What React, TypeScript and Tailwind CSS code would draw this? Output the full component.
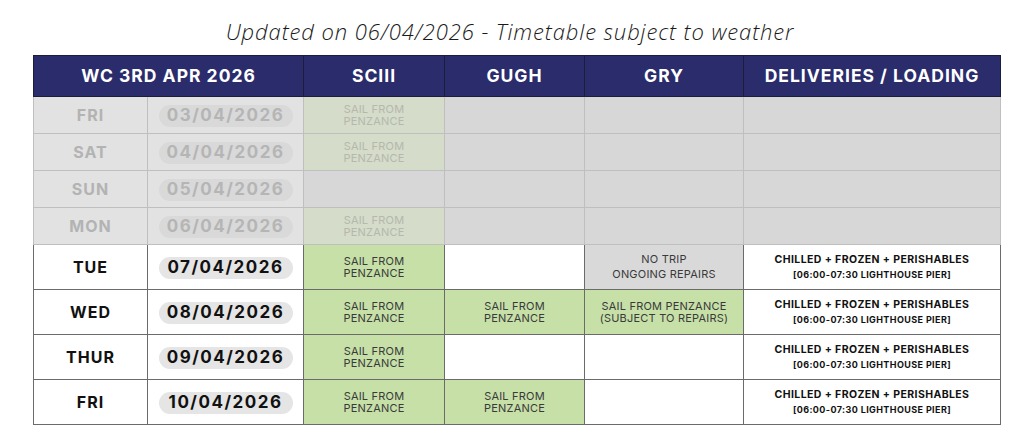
import React from 'react';

type Cell = { text?: string[]; tone?: 'green' | 'grey' | 'none' };

type Row = {
  day: string;
  date: string;
  past: boolean;
  scilly: Cell;
  gugh: Cell;
  gry: Cell;
  delivery: boolean;
};

const sail: Cell = { text: ['SAIL FROM', 'PENZANCE'], tone: 'green' };
const empty: Cell = { tone: 'none' };

const rows: Row[] = [
  { day: 'FRI', date: '03/04/2026', past: true, scilly: sail, gugh: empty, gry: empty, delivery: false },
  { day: 'SAT', date: '04/04/2026', past: true, scilly: sail, gugh: empty, gry: empty, delivery: false },
  { day: 'SUN', date: '05/04/2026', past: true, scilly: empty, gugh: empty, gry: empty, delivery: false },
  { day: 'MON', date: '06/04/2026', past: true, scilly: sail, gugh: empty, gry: empty, delivery: false },
  {
    day: 'TUE', date: '07/04/2026', past: false, scilly: sail, gugh: empty,
    gry: { text: ['NO TRIP', 'ONGOING REPAIRS'], tone: 'grey' }, delivery: true,
  },
  {
    day: 'WED', date: '08/04/2026', past: false, scilly: sail, gugh: sail,
    gry: { text: ['SAIL FROM PENZANCE', '(SUBJECT TO REPAIRS)'], tone: 'green' }, delivery: true,
  },
  { day: 'THUR', date: '09/04/2026', past: false, scilly: sail, gugh: empty, gry: empty, delivery: true },
  { day: 'FRI', date: '10/04/2026', past: false, scilly: sail, gugh: sail, gry: empty, delivery: true },
];

const font = { fontFamily: '"Inter", "Noto Sans", sans-serif' };

function TripCell({ cell, past }: { cell: Cell; past: boolean }) {
  let bg = past ? 'bg-[#d7d7d7]' : 'bg-white';
  if (cell.tone === 'green') bg = past ? 'bg-[#d5dcc9]' : 'bg-[#c6e0a8]';
  if (cell.tone === 'grey') bg = 'bg-[#d9d9d9]';
  const border = past ? 'border-[#bfbfbf]' : 'border-[#6b6b6b]';
  const textColour = past ? 'text-[#b4b8ad]' : 'text-[#3a3a3a]';
  const leading = cell.tone === 'grey' ? 'leading-[15px]' : 'leading-[12px]';
  return (
    <td className={`border ${border} ${bg} p-0 text-center align-middle`}>
      {cell.text && (
        <div className={`text-[11px] tracking-[0.2px] ${leading} ${textColour}`}>
          {cell.text.map((t) => (
            <div key={t}>{t}</div>
          ))}
        </div>
      )}
    </td>
  );
}

export default function App() {
  return (
    <div className="w-[1024px] h-[448px] bg-white" style={font}>
      {/* Title */}
      <div className="h-[55px] flex items-center justify-center pt-[8px] pr-[4px]">
        <p
          className="text-[22px] italic font-light tracking-[0.9px] text-[#1a1a1a]"
          style={{ fontFamily: '"Open Sans", "Noto Sans", sans-serif' }}
        >
          Updated on 06/04/2026 - Timetable subject to weather
        </p>
      </div>

      {/* Timetable */}
      <div className="pl-[33px]">
        <table className="table-fixed border-collapse w-[967px]">
          <colgroup>
            <col className="w-[114px]" />
            <col className="w-[156px]" />
            <col className="w-[141px]" />
            <col className="w-[140px]" />
            <col className="w-[159px]" />
            <col className="w-[257px]" />
          </colgroup>
          <thead>
            <tr className="h-[41px] bg-[#2b2c6b] text-white text-[17.5px] font-bold tracking-[1px]">
              <th colSpan={2} className="border border-[#1c1c3c] font-bold">WC 3RD APR 2026</th>
              <th className="border border-[#1c1c3c] font-bold">SCIII</th>
              <th className="border border-[#1c1c3c] font-bold">GUGH</th>
              <th className="border border-[#1c1c3c] font-bold">GRY</th>
              <th className="border border-[#1c1c3c] font-bold">DELIVERIES / LOADING</th>
            </tr>
          </thead>
          <tbody>
            {rows.map((row) => {
              const border = row.past ? 'border-[#bfbfbf]' : 'border-[#6b6b6b]';
              const sideBg = row.past ? 'bg-[#e2e2e2]' : 'bg-white';
              return (
                <tr key={row.date} className={row.past ? 'h-[37px]' : 'h-[45px]'}>
                  <td
                    className={`border ${border} ${sideBg} text-center text-[16px] font-bold tracking-[1px] ${
                      row.past ? 'text-[#b3b3b3]' : 'text-[#111]'
                    }`}
                  >
                    {row.day}
                  </td>
                  <td className={`border ${border} ${sideBg} text-center`}>
                    <span
                      className={`inline-flex items-center justify-center w-[134px] h-[22px] rounded-full text-[17px] font-bold tracking-[1.5px] ${
                        row.past ? 'bg-[#d9d9d9] text-[#b5b5b5]' : 'bg-[#e5e5e5] text-[#111]'
                      }`}
                    >
                      {row.date}
                    </span>
                  </td>
                  <TripCell cell={row.scilly} past={row.past} />
                  <TripCell cell={row.gugh} past={row.past} />
                  <TripCell cell={row.gry} past={row.past} />
                  <td className={`border ${border} ${row.past ? 'bg-[#d7d7d7]' : 'bg-white'} text-center`}>
                    {row.delivery && (
                      <div className="text-[#111] font-bold">
                        <div className="text-[10.5px] leading-[16px] tracking-[0.4px]">CHILLED + FROZEN + PERISHABLES</div>
                        <div className="text-[9px] leading-[14px] tracking-[0.4px]">[06:00-07:30 LIGHTHOUSE PIER]</div>
                      </div>
                    )}
                  </td>
                </tr>
              );
            })}
          </tbody>
        </table>
      </div>
    </div>
  );
}
